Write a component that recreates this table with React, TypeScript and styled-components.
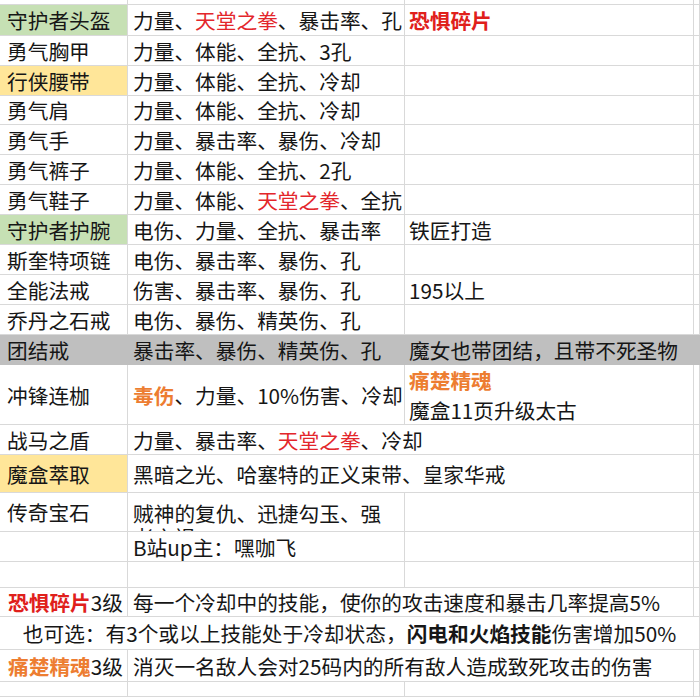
import React from 'react';
import styled, { createGlobalStyle } from 'styled-components';

const Global = createGlobalStyle`
  html, body { margin: 0; padding: 0; background: #ffffff; }
  body { font-family: "Noto Sans CJK SC", "Microsoft YaHei", sans-serif; }
`;

const COLS = '128px 277px 289px 6px';
const LINE = '#d9d9d9';

const Sheet = styled.div`
  display: flex;
  flex-direction: column;
  width: 700px;
  height: 697px;
  overflow: hidden;
  color: #161616;
  font-size: 20.7px;
`;

const Row = styled.div<{ $h: number }>`
  display: grid;
  grid-template-columns: ${COLS};
  height: ${(p) => p.$h}px;
  flex: none;
`;

const Cell = styled.div<{
  $bg?: string;
  $span?: number;
  $pad?: number;
  $line?: string;
  $center?: boolean;
}>`
  grid-column: span ${(p) => p.$span ?? 1};
  box-sizing: border-box;
  background: ${(p) => p.$bg ?? 'transparent'};
  border-right: 1px solid ${(p) => p.$line ?? LINE};
  border-bottom: 1px solid ${(p) => p.$line ?? LINE};
  padding-left: ${(p) => p.$pad ?? 5}px;
  padding-top: 1px;
  display: flex;
  align-items: center;
  justify-content: ${(p) => (p.$center ? 'center' : 'flex-start')};
  white-space: nowrap;
  overflow: hidden;
  line-height: 1;
`;

const StackCell = styled(Cell)`
  flex-direction: column;
  align-items: flex-start;
  justify-content: center;
  line-height: 30px;
  padding-top: 0;
`;

const WrapCell = styled(Cell)`
  align-items: flex-start;
  line-height: 24px;
  padding-top: 8px;
  white-space: normal;
`;

const Red = styled.span`
  color: #e3262b;
`;
const BoldRed = styled.span`
  color: #e0201b;
  font-weight: 700;
`;
const BoldOrange = styled.span`
  color: #ed7d31;
  font-weight: 700;
`;
const Bold = styled.span`
  font-weight: 700;
`;

const GREEN = '#c6e0b4';
const YELLOW = '#ffe699';
const GRAY = '#bfbfbf';

type Std = {
  name?: React.ReactNode;
  a?: React.ReactNode;
  b?: React.ReactNode;
  h?: number;
  bg?: string;
  wide?: boolean;
};

const StdRow: React.FC<Std> = ({ name, a, b, h = 30, bg, wide }) => (
  <Row $h={h}>
    <Cell $pad={7} $bg={bg}>{name}</Cell>
    {wide ? (
      <Cell $span={2}>{a}</Cell>
    ) : (
      <>
        <Cell>{a}</Cell>
        <Cell $pad={4}>{b}</Cell>
      </>
    )}
    <Cell $pad={0} />
  </Row>
);

export default function App() {
  return (
    <>
      <Global />
      <Sheet>
        <StdRow h={5} />
        <StdRow
          h={31}
          bg={GREEN}
          name="守护者头盔"
          a={<>力量、<Red>天堂之拳</Red>、暴击率、孔</>}
          b={<BoldRed>恐惧碎片</BoldRed>}
        />
        <StdRow name="勇气胸甲" a="力量、体能、全抗、3孔" />
        <StdRow bg={YELLOW} name="行侠腰带" a="力量、体能、全抗、冷却" />
        <StdRow h={29} name="勇气肩" a="力量、体能、全抗、冷却" />
        <StdRow name="勇气手" a="力量、暴击率、暴伤、冷却" />
        <StdRow name="勇气裤子" a="力量、体能、全抗、2孔" />
        <StdRow name="勇气鞋子" a={<>力量、体能、<Red>天堂之拳</Red>、全抗</>} />
        <StdRow bg={GREEN} name="守护者护腕" a="电伤、力量、全抗、暴击率" b="铁匠打造" />
        <StdRow name="斯奎特项链" a="电伤、暴击率、暴伤、孔" />
        <StdRow name="全能法戒" a="伤害、暴击率、暴伤、孔" b="195以上" />
        <StdRow name="乔丹之石戒" a="电伤、暴伤、精英伤、孔" />
        <Row $h={30}>
          <Cell $pad={7} $bg={GRAY} $line={GRAY}>团结戒</Cell>
          <Cell $bg={GRAY} $line={GRAY}>暴击率、暴伤、精英伤、孔</Cell>
          <Cell $pad={4} $bg={GRAY} $line={GRAY}>魔女也带团结，且带不死圣物</Cell>
          <Cell $pad={0} $bg={GRAY} $line={GRAY} />
        </Row>
        <Row $h={60}>
          <Cell $pad={7}>冲锋连枷</Cell>
          <Cell><BoldOrange>毒伤</BoldOrange>、力量、10%伤害、冷却</Cell>
          <StackCell $pad={4}>
            <BoldOrange>痛楚精魂</BoldOrange>
            <span>魔盒11页升级太古</span>
          </StackCell>
          <Cell $pad={0} />
        </Row>
        <StdRow wide name="战马之盾" a={<>力量、暴击率、<Red>天堂之拳</Red>、冷却</>} />
        <Row $h={38}>
          <Cell $pad={7} $bg={YELLOW}>魔盒萃取</Cell>
          <Cell $span={2}>黑暗之光、哈塞特的正义束带、皇家华戒</Cell>
          <Cell $pad={0} />
        </Row>
        <Row $h={39}>
          <Cell $pad={7}>传奇宝石</Cell>
          <WrapCell>贼神的复仇、迅捷勾玉、强<br />者之祸</WrapCell>
          <Cell $pad={4} />
          <Cell $pad={0} />
        </Row>
        <StdRow a="B站up主：嘿咖飞" />
        <StdRow h={26} />
        <Row $h={29}>
          <Cell $pad={8}><BoldRed>恐惧碎片</BoldRed>3级</Cell>
          <Cell $span={2}>每一个冷却中的技能，使你的攻击速度和暴击几率提高5%</Cell>
          <Cell $pad={0} />
        </Row>
        <Row $h={33}>
          <Cell $span={4} $pad={0} $center>
            也可选：有3个或以上技能处于冷却状态，<Bold>闪电和火焰技能</Bold>伤害增加50%
          </Cell>
        </Row>
        <Row $h={32}>
          <Cell $pad={8}><BoldOrange>痛楚精魂</BoldOrange>3级</Cell>
          <Cell $span={2}>消灭一名敌人会对25码内的所有敌人造成致死攻击的伤害</Cell>
          <Cell $pad={0} />
        </Row>
        <StdRow h={15} />
      </Sheet>
    </>
  );
}
